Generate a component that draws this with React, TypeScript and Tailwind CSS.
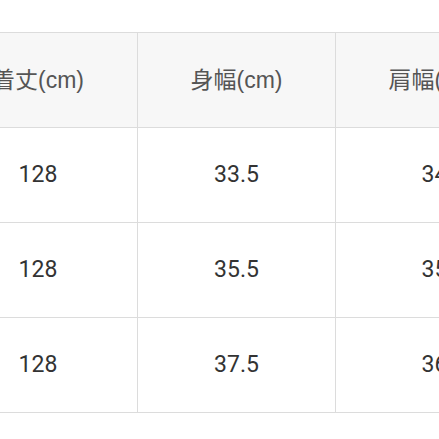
const headers = ["着丈(cm)", "身幅(cm)", "肩幅(cm)", "袖丈(cm)"];
const rows = [
  ["128", "33.5", "34", "58"],
  ["128", "35.5", "35", "59"],
  ["128", "37.5", "36", "60"],
];

export default function App() {
  return (
    <div className="w-[439px] h-[439px] overflow-hidden bg-white pt-[32px]">
      <div
        className="ml-[-61px] grid grid-cols-[199px_198px_198px_198px] w-max border-t border-[#dcdcdc] text-[23px]"
        style={{ fontFamily: 'Roboto, "Noto Sans CJK JP", sans-serif' }}
      >
        {headers.map((h) => (
          <div
            key={h}
            className="h-[95px] flex items-center justify-center bg-[#f7f7f7] text-[#555555] border-r border-b border-[#dcdcdc]"
            style={{ fontFamily: '"Liberation Sans", "Noto Sans CJK JP", sans-serif' }}
          >
            {h}
          </div>
        ))}
        {rows.map((r, i) =>
          r.map((v, j) => (
            <div
              key={`${i}-${j}`}
              className="h-[95px] flex items-center justify-center bg-white text-[#333333] border-r border-b border-[#dcdcdc]"
            >
              {v}
            </div>
          ))
        )}
      </div>
    </div>
  );
}
